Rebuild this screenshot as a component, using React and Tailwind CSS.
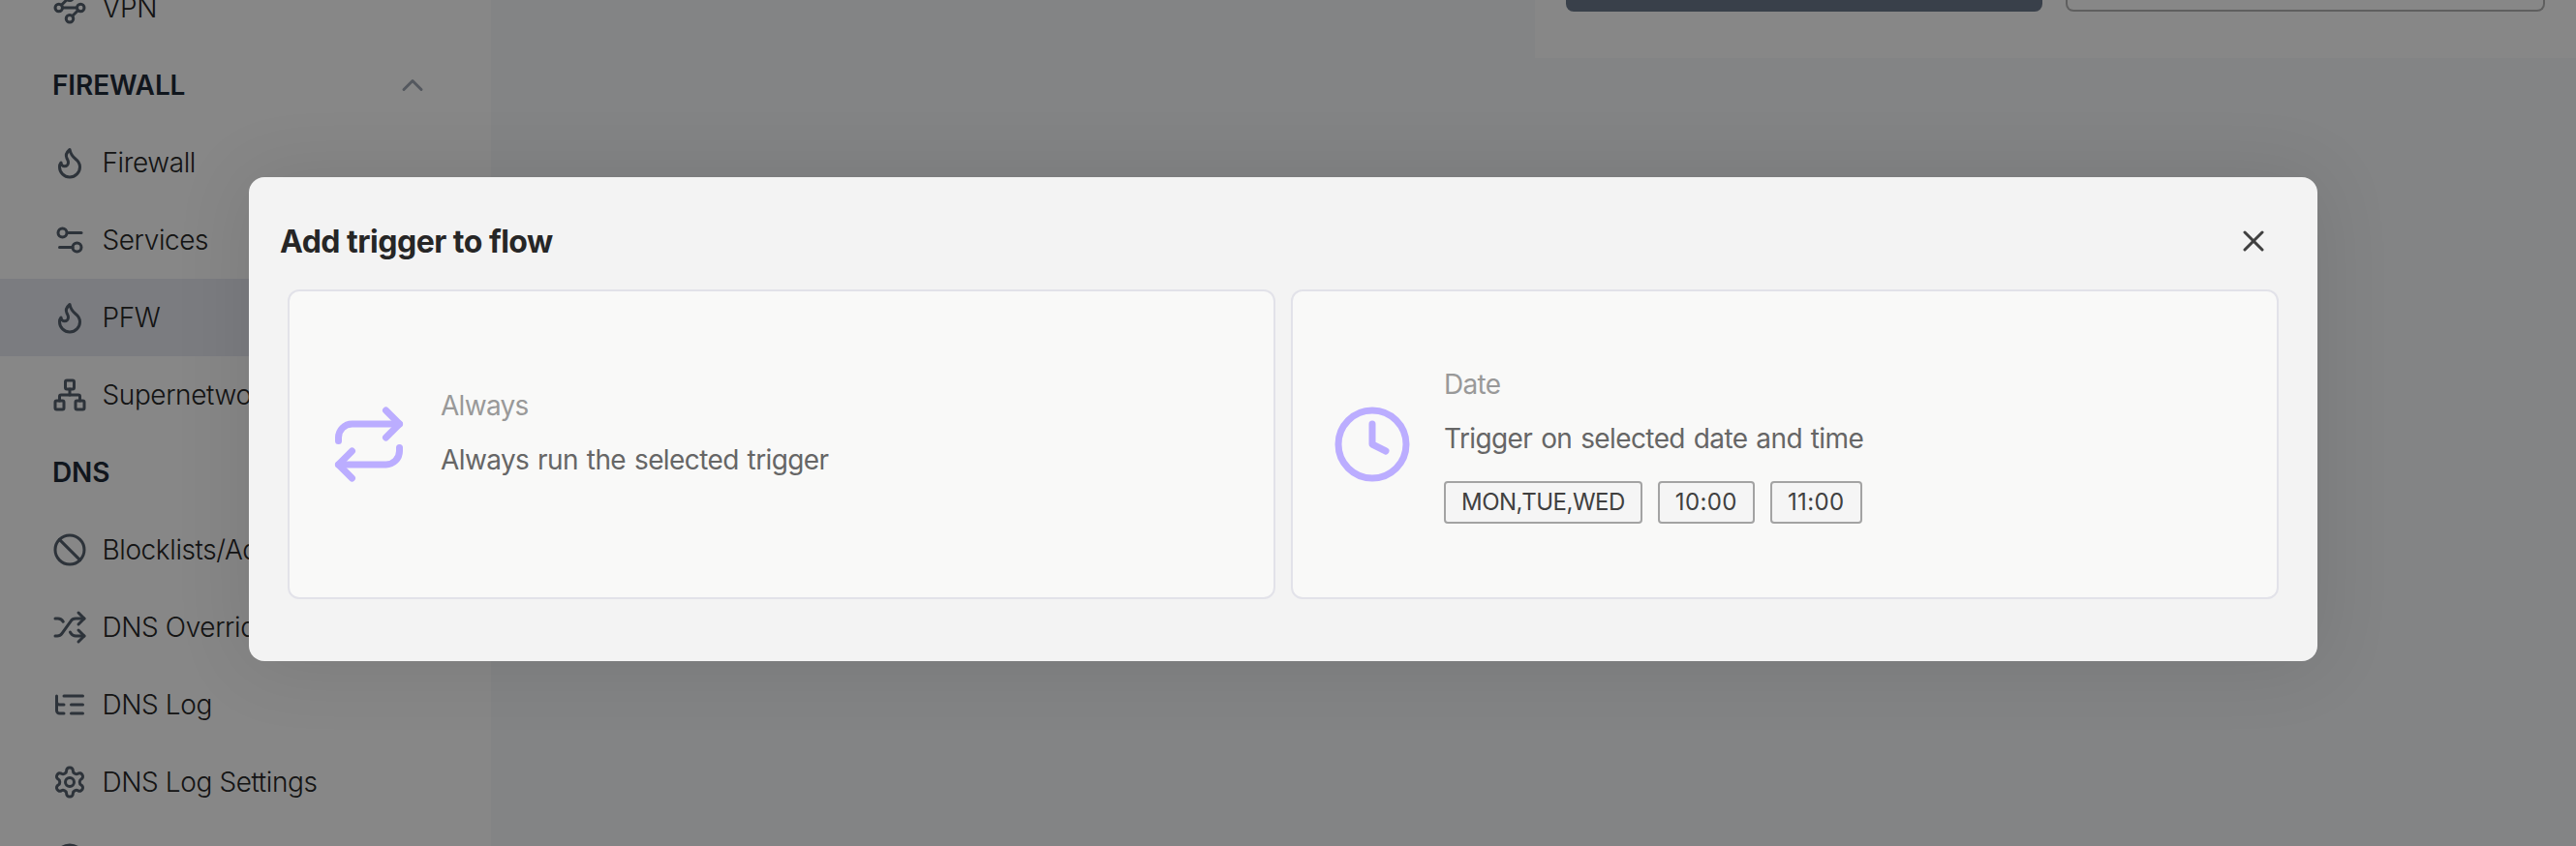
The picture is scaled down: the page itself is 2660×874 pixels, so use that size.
import React from "react";

function Icon({ size = 36, className = "", children }) {
  return (
    <svg width={size} height={size} viewBox="0 0 24 24" fill="none" stroke="currentColor" strokeWidth="2" strokeLinecap="round" strokeLinejoin="round" className={"shrink-0 " + className}>
      {children}
    </svg>
  );
}

const icons = {
  vpn: (
    <>
      <circle cx="12" cy="4.5" r="2.5" />
      <path d="m10.2 6.3-3.9 3.9" />
      <circle cx="4.5" cy="12" r="2.5" />
      <path d="M7 12h10" />
      <circle cx="19.5" cy="12" r="2.5" />
      <path d="m13.8 17.7 3.9-3.9" />
      <circle cx="12" cy="19.5" r="2.5" />
    </>
  ),
  flame: <path d="M8.5 14.5A2.5 2.5 0 0 0 11 12c0-1.38-.5-2-1-3-1.072-2.143-.224-4.054 2-6 .5 2.5 2 4.9 4 6.5 2 1.6 3 3.5 3 5.5a7 7 0 1 1-14 0c0-1.153.433-2.294 1-3a2.5 2.5 0 0 0 2.5 2.5z" />,
  services: (
    <>
      <path d="M20 7h-9" />
      <path d="M14 17H5" />
      <circle cx="17" cy="17" r="3" />
      <circle cx="7" cy="7" r="3" />
    </>
  ),
  network: (
    <>
      <rect x="16" y="16" width="6" height="6" rx="1" />
      <rect x="2" y="16" width="6" height="6" rx="1" />
      <rect x="9" y="2" width="6" height="6" rx="1" />
      <path d="M5 16v-3a1 1 0 0 1 1-1h12a1 1 0 0 1 1 1v3" />
      <path d="M12 12V8" />
    </>
  ),
  ban: (
    <>
      <circle cx="12" cy="12" r="10" />
      <path d="m4.9 4.9 14.2 14.2" />
    </>
  ),
  shuffle: (
    <>
      <path d="M2 18h1.4c1.3 0 2.5-.6 3.3-1.7l6.1-8.6c.7-1.1 2-1.7 3.3-1.7H22" />
      <path d="m18 2 4 4-4 4" />
      <path d="M2 6h1.9c1.5 0 2.9.9 3.6 2.2" />
      <path d="M22 18h-5.9c-1.3 0-2.6-.7-3.3-1.8l-.5-.8" />
      <path d="m18 14 4 4-4 4" />
    </>
  ),
  tree: (
    <>
      <path d="M21 12h-8" />
      <path d="M21 6H8" />
      <path d="M21 18h-8" />
      <path d="M3 6v4c0 1.1.9 2 2 2h3" />
      <path d="M3 10v6c0 1.1.9 2 2 2h3" />
    </>
  ),
  gear: (
    <>
      <path d="M12.22 2h-.44a2 2 0 0 0-2 2v.18a2 2 0 0 1-1 1.73l-.43.25a2 2 0 0 1-2 0l-.15-.08a2 2 0 0 0-2.73.73l-.22.38a2 2 0 0 0 .73 2.73l.15.1a2 2 0 0 1 1 1.72v.51a2 2 0 0 1-1 1.74l-.15.09a2 2 0 0 0-.73 2.73l.22.38a2 2 0 0 0 2.73.73l.15-.08a2 2 0 0 1 2 0l.43.25a2 2 0 0 1 1 1.73V20a2 2 0 0 0 2 2h.44a2 2 0 0 0 2-2v-.18a2 2 0 0 1 1-1.73l.43-.25a2 2 0 0 1 2 0l.15.08a2 2 0 0 0 2.73-.73l.22-.39a2 2 0 0 0-.73-2.73l-.15-.08a2 2 0 0 1-1-1.74v-.5a2 2 0 0 1 1-1.74l.15-.09a2 2 0 0 0 .73-2.73l-.22-.38a2 2 0 0 0-2.73-.73l-.15.08a2 2 0 0 1-2 0l-.43-.25a2 2 0 0 1-1-1.73V4a2 2 0 0 0-2-2z" />
      <circle cx="12" cy="12" r="3" />
    </>
  ),
  circle: <circle cx="12" cy="12" r="10" />,
};

function NavItem({ icon, label, active }) {
  return (
    <div className={"flex h-20 shrink-0 items-center gap-[15.5px] pl-[54px] " + (active ? "bg-[#e4e6ed]" : "")}>
      <Icon className="text-[#535e6b]">{icons[icon]}</Icon>
      <span className="whitespace-nowrap text-[28px] leading-[42px] font-light tracking-[-0.4px] text-[#262626]">{label}</span>
    </div>
  );
}

function NavHeading({ label, chevron }) {
  return (
    <div className="flex h-20 shrink-0 items-center justify-between pl-[54px] pr-[63px]">
      <span className="text-[28px] leading-[42px] font-semibold tracking-[-0.1px] text-[#1f2937]">{label}</span>
      {chevron && (
        <Icon className="text-[#9ca3af]">
          <path d="m18 15-6-6-6 6" />
        </Icon>
      )}
    </div>
  );
}

function Tag({ numeric, children }) {
  return (
    <span className={"flex h-11 items-center rounded-[4px] border-2 border-[#a3a3a3] bg-[#f5f5f5] px-4 pt-px text-[24px] leading-9 text-[#404040] " + (numeric ? "tracking-[0.4px]" : "tracking-[-0.5px]")}>{children}</span>
  );
}

function TriggerCard({ icon, title, description, tags }) {
  return (
    <div className="flex h-80 flex-1 items-center gap-8 rounded-[12px] border-2 border-[#e2e2e9] bg-[#f9f9f8] px-10">
      <Icon size={84} className="text-[#bbadff]">{icon}</Icon>
      <div className="flex flex-col pb-0.5">
        <span className="text-[28px] leading-[42px] tracking-[-0.7px] text-[#999999]">{title}</span>
        <span className="mt-3.5 text-[28px] leading-[42px] tracking-[-0.6px] [word-spacing:1.6px] text-[#666666]">{description}</span>
        <div className="mt-[23px] flex gap-4">
          {tags.map((t) => (
            <Tag key={t} numeric={/^\d/.test(t)}>{t}</Tag>
          ))}
        </div>
      </div>
    </div>
  );
}

export default function App() {
  return (
    <div className="relative h-[874px] w-[2660px] overflow-hidden bg-[#f3f4f6] font-['Inter',sans-serif]">
      <div className="flex h-full">
        <aside className="h-full w-[507px] shrink-0 overflow-hidden bg-[#f9f9f9]">
          <div className="-mt-8 flex flex-col">
            <NavItem icon="vpn" label="VPN" />
            <NavHeading label="FIREWALL" chevron />
            <NavItem icon="flame" label="Firewall" />
            <NavItem icon="services" label="Services" />
            <NavItem icon="flame" label="PFW" active />
            <NavItem icon="network" label="Supernetworks" />
            <NavHeading label="DNS" />
            <NavItem icon="ban" label="Blocklists/Ad-Block" />
            <NavItem icon="shuffle" label="DNS Overrides" />
            <NavItem icon="tree" label="DNS Log" />
            <NavItem icon="gear" label="DNS Log Settings" />
            <NavItem icon="circle" label="" />
          </div>
        </aside>
        <main className="flex flex-1 justify-end">
          <section className="flex h-[60px] w-[1075px] gap-6 bg-[#f9f9f9] px-8">
            <div className="h-3 flex-1 rounded-b-[8px] bg-[#6a778a]" />
            <div className="h-3 flex-1 rounded-b-[8px] border-2 border-t-0 border-[#b0b0b0]" />
          </section>
        </main>
      </div>

      <div className="absolute inset-0 flex bg-black/46 pt-[183px] pl-[257px]">
        <div className="flex h-[500px] w-[2136px] flex-col rounded-[16px] bg-[#f3f3f3] shadow-[0_2px_80px_rgba(0,0,0,0.1)]">
          <header className="flex h-[116px] items-center justify-between pt-4 pr-12 pl-8">
            <h2 className="pt-0.5 text-[32px] leading-[48px] font-bold tracking-[-0.5px] text-[#262626]">Add trigger to flow</h2>
            <Icon className="text-[#404040]">
              <path d="M18 6 6 18" />
              <path d="m6 6 12 12" />
            </Icon>
          </header>
          <div className="flex gap-4 px-10">
            <TriggerCard
              icon={
                <>
                  <path d="m17 2 4 4-4 4" />
                  <path d="M3 11v-1a4 4 0 0 1 4-4h14" />
                  <path d="m7 22-4-4 4-4" />
                  <path d="M21 13v1a4 4 0 0 1-4 4H3" />
                </>
              }
              title="Always"
              description="Always run the selected trigger"
              tags={[]}
            />
            <TriggerCard
              icon={
                <>
                  <circle cx="12" cy="12" r="10" />
                  <path d="M12 6v6l4 2" />
                </>
              }
              title="Date"
              description="Trigger on selected date and time"
              tags={["MON,TUE,WED", "10:00", "11:00"]}
            />
          </div>
        </div>
      </div>
    </div>
  );
}
